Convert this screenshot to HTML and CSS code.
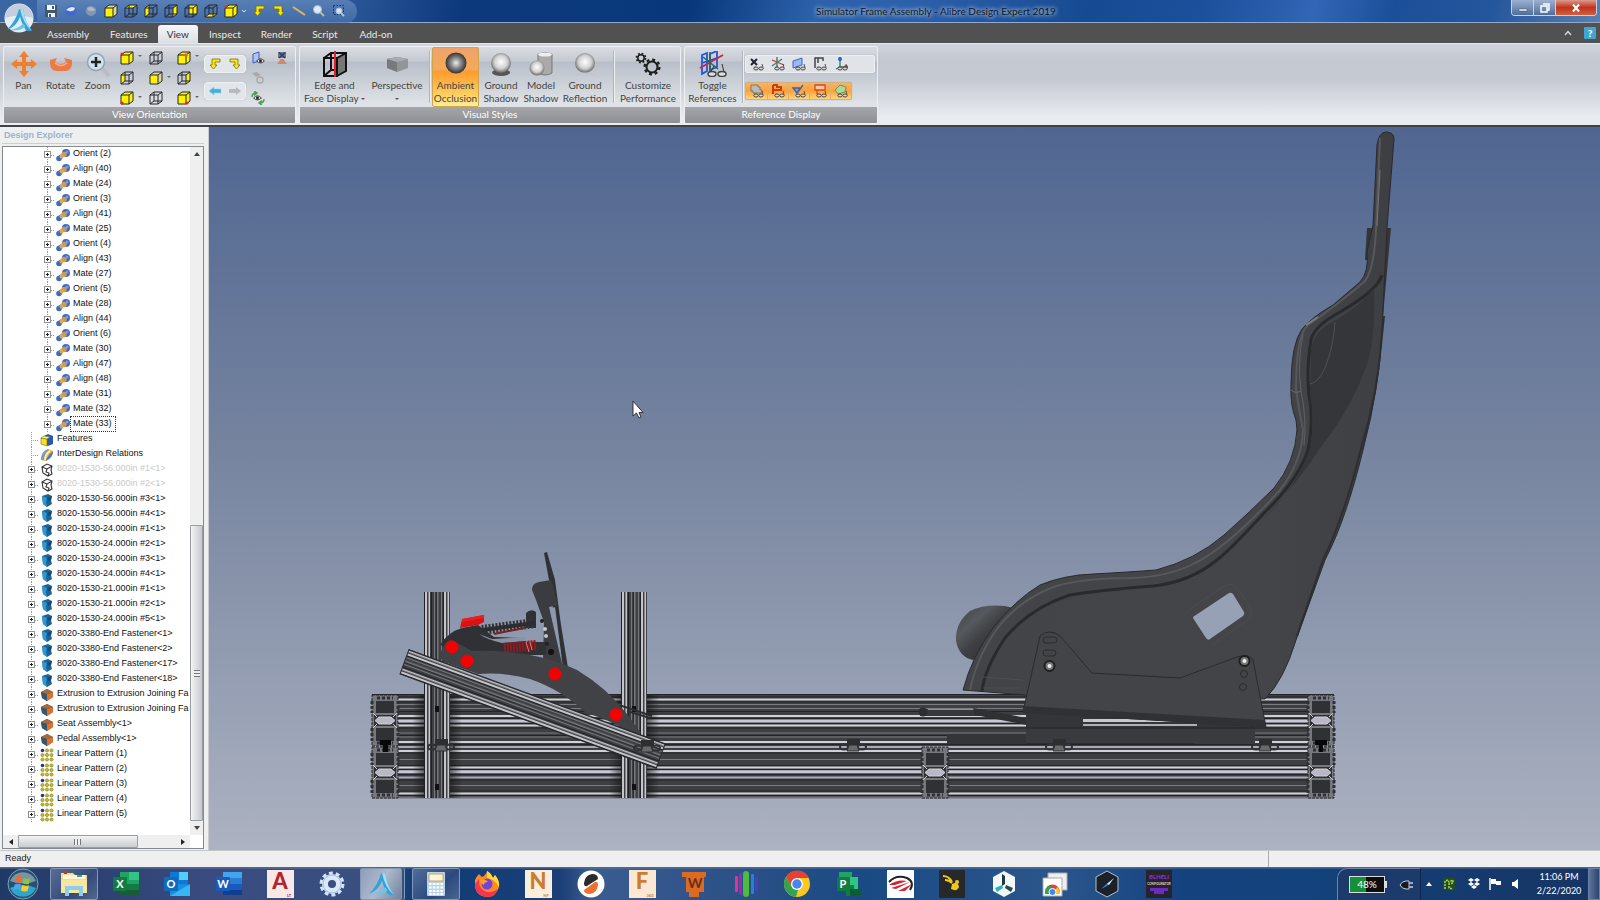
FILE: index.html
```html
<!DOCTYPE html>
<html lang="en">
<head>
<meta charset="utf-8">
<title>Simulator Frame Assembly - Alibre Design Expert 2019</title>
<link rel="stylesheet" href="styles.css">
</head>
<body>
<svg class="defs" aria-hidden="true">
  <defs>
    <path id="wire" d="M5 1V10H13M5 10L1 13M1 4H9V13H1ZM5 1H13V10M1 4L5 1M9 4L13 1M9 13L13 10" fill="none" stroke="#26262c" stroke-width="1"/>
    <symbol id="c-none" viewBox="0 0 14 14"><use href="#wire"/></symbol>
    <symbol id="c-front" viewBox="0 0 14 14"><path d="M1 4L5 1H13V10L9 13H1Z" fill="#d8d8a0"/><path d="M1 4H9V13H1Z" fill="#fff200"/><path d="M1 4H9V13H1ZM1 4L5 1H13V10L9 13M9 4L13 1" fill="none" stroke="#26262c"/></symbol>
    <symbol id="c-top" viewBox="0 0 14 14"><path d="M1 4L5 1H13L9 4Z" fill="#fff200"/><use href="#wire"/></symbol>
    <symbol id="c-left" viewBox="0 0 14 14"><path d="M1 4L5 1V10L1 13Z" fill="#fff200"/><use href="#wire"/></symbol>
    <symbol id="c-right" viewBox="0 0 14 14"><path d="M9 4L13 1V10L9 13Z" fill="#fff200"/><use href="#wire"/></symbol>
    <symbol id="c-back" viewBox="0 0 14 14"><path d="M5 1H13V10H5Z" fill="#fff200"/><use href="#wire"/></symbol>
    <symbol id="c-bottom" viewBox="0 0 14 14"><path d="M1 13L5 10H13L9 13Z" fill="#fff200"/><use href="#wire"/></symbol>
    <symbol id="c-iso" viewBox="0 0 14 14"><path d="M1 4L5 1H13V10L9 13H1Z" fill="#fff200" stroke="#26262c"/><path d="M1 4H9V13M9 4L13 1" fill="none" stroke="#26262c"/></symbol>
    <symbol id="turn-l" viewBox="0 0 12 12"><path d="M11 1V4H6V7H8L4.500 11L1 7H3V1Z" fill="#ffe800" stroke="#77701a" stroke-width=".8"/></symbol>
    <symbol id="turn-r" viewBox="0 0 12 12"><path d="M1 1V4H6V7H4L7.500 11L11 7H9V1Z" fill="#ffe800" stroke="#77701a" stroke-width=".8"/></symbol>
    <symbol id="glasses" viewBox="0 0 14 14"><path d="M5 9.500L4 12M12 7L13 10.500" stroke="#555" fill="none"/><ellipse cx="6" cy="11.500" rx="2.200" ry="1.500" fill="#ddd" stroke="#444"/><ellipse cx="11" cy="11.500" rx="2.200" ry="1.500" fill="#ddd" stroke="#444"/></symbol>
    <symbol id="eye" viewBox="0 0 10 7"><path d="M.5 3.500Q5-1.500 9.500 3.500Q5 8 .5 3.500Z" fill="#eee" stroke="#222"/><circle cx="5" cy="3.500" r="1.700" fill="#222"/></symbol>
    <symbol id="alibre" viewBox="0 0 26 26"><path d="M2 22Q10 14 13 3H17Q18 14 25 23Q21 24 19 22Q15 15 14 10Q11 19 2 22Z" fill="#36a3d8"/><path d="M5 22Q13 21 17 16L19 19Q13 24 5 22Z" fill="#6cc6ea"/><path d="M14 3H17Q18 14 25 23Q17 17 14 3Z" fill="#a8def5"/></symbol>
    <symbol id="i-mate" viewBox="0 0 14 14"><path d="M3 10L6 8" stroke="#3d6cba" stroke-width="4"/><circle cx="10" cy="5" r="4" fill="#4169c4"/><circle cx="8" cy="6.500" r="2.700" fill="#d29b48"/><circle cx="3" cy="10.500" r="2.800" fill="#3d6cba"/><circle cx="5.500" cy="8.500" r="2" fill="#d9aa55"/><circle cx="11" cy="4" r="1.500" fill="#7f9be0"/></symbol>
    <symbol id="i-feature" viewBox="0 0 14 14"><path d="M4 3L8 1L13 3V11L8 13L4 11Z" fill="#2c58b0"/><path d="M1 5L7 6V13L1 11Z" fill="#f5e51c" stroke="#776d10" stroke-width=".6"/><path d="M1 5L4 3L10 4L7 6Z" fill="#fff68c" stroke="#776d10" stroke-width=".6"/></symbol>
    <symbol id="i-relation" viewBox="0 0 14 14"><path d="M1 12Q1 3 8 1L13 3Q14 9 6 13Z" fill="#f4b32c"/><path d="M1 12Q1 4 8 1L9 2Q4 5 4 12Z" fill="#6a9be0"/><path d="M13 3Q13 9 6 13Q7 8 13 3Z" fill="#4a78c8"/><path d="M5 12Q5 6 10 3" stroke="#fff6c8" stroke-width="1.500" fill="none"/></symbol>
    <symbol id="i-ghost" viewBox="0 0 14 14"><path d="M2 4L7 1L12 3L11 7L12 11L8 13L3 10ZM2 4L7 6L12 3M7 6L6 9L9 10L8 13" fill="#fff" stroke="#333" stroke-width="1.100"/></symbol>
    <symbol id="i-part" viewBox="0 0 14 14"><path d="M2 3L8 1L12 3L11 7L12 11L7 14L3 11Z" fill="#1d6496"/><path d="M2 3L7 5L6 9L7 14L3 11Z" fill="#2f97d4"/><path d="M7 5L12 3L11 7L8 8Z" fill="#174a70"/></symbol>
    <symbol id="i-asm" viewBox="0 0 14 14"><path d="M1 4L7 1L13 4V9L7 13L2 10Z" fill="#6d4028"/><path d="M1 4L7 6V13L2 10Z" fill="#35586c"/><path d="M7 6L13 4V9L7 13Z" fill="#e0712c"/><path d="M1 4L7 1L13 4L7 6Z" fill="#a66a43"/></symbol>
    <symbol id="i-pattern" viewBox="0 0 14 14"><g fill="#c8bd22" stroke="#7c7512" stroke-width=".6"><circle cx="7" cy="2.500" r="1.600"/><circle cx="11.500" cy="2.500" r="1.600"/><circle cx="2.500" cy="7" r="1.600"/><circle cx="7" cy="7" r="1.600"/><circle cx="11.500" cy="7" r="1.600"/><circle cx="2.500" cy="11.500" r="1.600"/><circle cx="7" cy="11.500" r="1.600"/><circle cx="11.500" cy="11.500" r="1.600"/></g><circle cx="2.500" cy="2.500" r="1.800" fill="#26329c"/></symbol>
    <radialGradient id="ball" cx=".5" cy=".45" r=".55"><stop offset="0" stop-color="#fff"/><stop offset=".6" stop-color="#d0d0d0"/><stop offset="1" stop-color="#666"/></radialGradient>
    <radialGradient id="darkball" cx=".5" cy=".5" r=".5"><stop offset="0" stop-color="#eee"/><stop offset=".5" stop-color="#888"/><stop offset="1" stop-color="#333"/></radialGradient>
  </defs>
</svg>

<header class="titlebar">
  <button class="app-orb" aria-label="Application menu"><svg width="30" height="34" viewBox="0 0 30 34"><circle cx="15" cy="17" r="14.500" fill="#e4edf6"/><path d="M1 17a14 14 0 0 1 28 0Q15 12 1 17Z" fill="#c3cfde"/><use href="#alibre" x="1" y="5" width="28" height="28"/></svg></button>
  <nav class="qat" aria-label="Quick access">
    <button aria-label="Save"><svg width="14" height="14"><path d="M1 1H13V13H1Z" fill="#41586f"/><path d="M3 1H11V6H3ZM4 9H11V13H4Z" fill="#f4f8fb"/><path d="M8 2H10V5H8ZM5 10H7V13H5Z" fill="#41586f"/></svg></button>
    <button aria-label="Undo"><svg width="14" height="14"><circle cx="7" cy="7" r="5.500" fill="#4468d0"/><path d="M2 6Q7 1 11 4Q10 8 5 7Z" fill="#dfe8ff"/></svg></button>
    <button aria-label="Redo"><svg width="14" height="14"><circle cx="7" cy="7" r="5" fill="#8496b4"/><path d="M12 6Q7 1 3 4Q4 8 9 7Z" fill="#a8b5ca"/></svg></button>
    <button aria-label="Front"><svg width="14" height="14"><use href="#c-front"/></svg></button>
    <button aria-label="Top"><svg width="14" height="14"><use href="#c-top"/></svg></button>
    <button aria-label="Left"><svg width="14" height="14"><use href="#c-left"/></svg></button>
    <button aria-label="Right"><svg width="14" height="14"><use href="#c-right"/></svg></button>
    <button aria-label="Back"><svg width="14" height="14"><use href="#c-back"/></svg></button>
    <button aria-label="Bottom"><svg width="14" height="14"><use href="#c-bottom"/></svg></button>
    <button aria-label="Isometric" class="with-caret"><svg width="24" height="14"><use href="#c-iso" width="14" height="14"/><circle cx="2" cy="3" r="1.500" fill="#e22"/><path d="M18 6l2 2l2-2" stroke="#dde6f2" fill="none"/></svg></button>
    <button aria-label="Turn left"><svg width="12" height="12"><use href="#turn-l"/></svg></button>
    <button aria-label="Turn right"><svg width="12" height="12"><use href="#turn-r"/></svg></button>
    <button aria-label="Measure"><svg width="14" height="14"><path d="M1 3L13 11" stroke="#e3b458" stroke-width="2"/></svg></button>
    <button aria-label="Zoom"><svg width="14" height="14"><path d="M8 8L12 12" stroke="#d7b45a" stroke-width="2"/><circle cx="5.500" cy="5.500" r="4" fill="#dceaf6" stroke="#a9bdd4"/></svg></button>
    <button aria-label="Zoom window"><svg width="14" height="14"><path d="M1.500 1.500H11.500V10.500H1.500Z" fill="none" stroke="#16335c" stroke-dasharray="1.500 1.500"/><path d="M8 8L12 12" stroke="#b9c6d8" stroke-width="2"/><circle cx="7" cy="7" r="3" fill="#cfe2f4" stroke="#a9bdd4"/></svg></button>
  </nav>
  <h1 class="title">Simulator Frame Assembly - Alibre Design Expert 2019</h1>
  <div class="win-buttons">
    <button class="win-min" aria-label="Minimize"><svg width="10" height="10"><path d="M1 6H9V8H1Z" fill="#fff" stroke="#445" stroke-width=".5"/></svg></button>
    <button class="win-max" aria-label="Restore"><svg width="10" height="10"><path d="M3 1H9V7H7M1 3H7V9H1Z" fill="none" stroke="#fff" stroke-width="1.500"/></svg></button>
    <button class="win-close" aria-label="Close"><svg width="10" height="10"><path d="M2 1.500L8 8.500M8 1.500L2 8.500" stroke="#fff" stroke-width="2.200"/></svg></button>
  </div>
</header>

<nav class="tabs">
  <a href="#assembly">Assembly</a><a href="#features">Features</a><a href="#view" class="active">View</a><a href="#inspect">Inspect</a><a href="#render">Render</a><a href="#script">Script</a><a href="#addon">Add-on</a>
  <div class="tabs-end">
    <button aria-label="Collapse ribbon"><svg width="8" height="6"><path d="M1 5L4 1.500L7 5" fill="none" stroke="#ddd" stroke-width="1.300"/></svg></button>
    <button class="help" aria-label="Help">?</button>
  </div>
</nav>

<section class="ribbon">
  <div class="group g-orient">
    <div class="tools">
      <button class="big"><svg width="26" height="26" viewBox="0 0 26 26"><path d="M13 0L18 6H15V11H20V8L26 13L20 18V15H15V20H18L13 26L8 20H11V15H6V18L0 13L6 8V11H11V6H8Z" fill="#f08030"/></svg><span>Pan</span></button>
      <button class="big"><svg width="26" height="26" viewBox="0 0 26 26"><path d="M2 9L9 7L7 11Q13 15 18 11L16 7L24 9Q25 19 18 20H8Q1 19 2 9Z" fill="#ea7a48"/><path d="M7 12Q13 17 19 12" stroke="#f8b08a" stroke-width="1.500" fill="none"/></svg><span>Rotate</span></button>
      <button class="big"><svg width="26" height="26" viewBox="0 0 26 26"><path d="M17 17L24 25" stroke="#b9bcc4" stroke-width="4"/><circle cx="11" cy="11" r="8.500" fill="#cde3ee" stroke="#93a3ae" stroke-width="1.500"/><path d="M11 6V16M6 11H16" stroke="#222" stroke-width="2.500"/></svg><span>Zoom</span></button>
      <div class="cubes">
        <button aria-label="View 1"><svg width="24" height="14"><use href="#c-iso" width="14" height="14"/><circle cx="2" cy="3" r="1.600" fill="#e22"/><path d="M18 4h4l-2 2z" fill="#666"/></svg></button>
        <button aria-label="View 2"><svg width="24" height="14"><use href="#c-none" width="14" height="14"/></svg></button>
        <button aria-label="View 3"><svg width="24" height="14"><use href="#c-iso" width="14" height="14"/><circle cx="9" cy="4" r="1.800" fill="#e62"/><path d="M18 4h4l-2 2z" fill="#666"/></svg></button>
        <button aria-label="View 4"><svg width="24" height="14"><use href="#c-left" width="14" height="14"/></svg></button>
        <button aria-label="View 5"><svg width="24" height="14"><use href="#c-front" width="14" height="14"/><path d="M18 5h4l-2 2z" fill="#666"/></svg></button>
        <button aria-label="View 6"><svg width="24" height="14"><use href="#c-right" width="14" height="14"/></svg></button>
        <button aria-label="View 7"><svg width="24" height="14"><use href="#c-iso" width="14" height="14"/><circle cx="2" cy="12" r="1.600" fill="#e22"/><path d="M18 5h4l-2 2z" fill="#666"/></svg></button>
        <button aria-label="View 8"><svg width="24" height="14"><use href="#c-none" width="14" height="14"/></svg></button>
        <button aria-label="View 9"><svg width="24" height="14"><use href="#c-iso" width="14" height="14"/><circle cx="10" cy="12" r="1.600" fill="#e22"/><path d="M18 5h4l-2 2z" fill="#666"/></svg></button>
      </div>
      <div class="pairs">
        <div class="pair"><button aria-label="Rotate left"><svg width="12" height="12"><use href="#turn-l"/></svg></button><button aria-label="Rotate right"><svg width="12" height="12"><use href="#turn-r"/></svg></button></div>
        <div class="pair"><button aria-label="Previous view"><svg width="14" height="10"><path d="M1 5L6 1V3H13V7H6V9Z" fill="#3fb0dc" stroke="#9cd0e4" stroke-width=".6"/></svg></button><button aria-label="Next view"><svg width="14" height="10"><path d="M13 5L8 1V3H1V7H8V9Z" fill="#b6b9bd"/></svg></button></div>
      </div>
      <div class="mini">
        <button aria-label="Orient to plane"><svg width="14" height="14"><path d="M2 3L8 1V10L2 12Z" fill="#aec4ee" stroke="#3a60c8"/><use href="#eye" x="5" y="7" width="9" height="6"/></svg></button>
        <button aria-label="Clear view"><svg width="14" height="14"><path d="M3 1H11V7H3Z" fill="#777"/><path d="M4 1.500L10 7M10 1.500L4 7" stroke="#223b88" stroke-width="1.500"/><path d="M5 8H9V9L12 13H2L5 9Z" fill="#d88668"/></svg></button>
        <button aria-label="Hide view"><svg width="14" height="14"><path d="M1 2L6 1L10 4L5 6Z" fill="#aaa"/><circle cx="9" cy="9" r="3" fill="none" stroke="#aaa" stroke-width="1.500"/></svg></button>
        <button aria-label="Rotate view"><svg width="14" height="14"><path d="M1 6Q1 2 5 2M3 0L6 2L3 4.500M13 8Q13 12 9 12M11 9.500L8 12L11 14" fill="none" stroke="#46a355" stroke-width="1.500"/><use href="#eye" x="2" y="4" width="9" height="6"/></svg></button>
      </div>
    </div>
    <h2>View Orientation</h2>
  </div>
  <div class="group g-style">
    <div class="tools">
      <button class="big w-edge"><svg width="26" height="26" viewBox="0 0 26 26"><path d="M15 7L24 2V20L15 25Z" fill="#777"/><path d="M2 7H15V25H2ZM2 7L9 2H24V20L15 25M15 7L24 2M9 2V19L2 25M9 19H15" fill="none" stroke="#111" stroke-width="2"/><path d="M13 0V26" stroke="#e81c2c" stroke-width="2"/></svg><span>Edge and<br>Face Display <i></i></span></button>
      <button class="big w-persp"><svg width="26" height="26" viewBox="0 0 26 26"><path d="M3 8L13 6V21L3 17Z" fill="#777b80"/><path d="M13 6L24 8V17L13 21Z" fill="#92969b"/><path d="M3 8L13 6L24 8L13 11Z" fill="#a7abb0"/></svg><span>Perspective<br><i></i></span></button>
      <hr>
      <button class="big w-amb active"><svg width="26" height="26" viewBox="0 0 26 26"><circle cx="13" cy="12" r="10.500" fill="url(#darkball)"/></svg><span>Ambient<br>Occlusion</span></button>
      <button class="big w-shadow"><svg width="26" height="26" viewBox="0 0 26 26"><ellipse cx="13" cy="21.500" rx="9" ry="3.500" fill="#555"/><circle cx="13" cy="12" r="10" fill="url(#ball)"/></svg><span>Ground<br>Shadow</span></button>
      <button class="big w-model"><svg width="26" height="26" viewBox="0 0 26 26"><path d="M10 3Q17 0 24 3V22Q17 26 10 22Z" fill="#aaa" stroke="#777"/><ellipse cx="17" cy="3.500" rx="7" ry="2" fill="#eee"/><circle cx="9" cy="17" r="7.500" fill="url(#ball)"/></svg><span>Model<br>Shadow</span></button>
      <button class="big w-reflect"><svg width="26" height="26" viewBox="0 0 26 26"><circle cx="13" cy="12" r="10" fill="url(#ball)"/><path d="M4 24Q13 20 22 24" stroke="#c0c2c6" fill="none"/></svg><span>Ground<br>Reflection</span></button>
      <hr>
      <button class="big w-perf"><svg width="26" height="26" viewBox="0 0 26 26"><g fill="none" stroke="#1a1a1a"><circle cx="6" cy="7" r="3.200" stroke-width="1.500"/><circle cx="6" cy="7" r="4.600" stroke-width="1.600" stroke-dasharray="1.800 1.810"/><circle cx="17" cy="16" r="5.500" stroke-width="2"/><circle cx="17" cy="16" r="7.400" stroke-width="2.200" stroke-dasharray="2.900 2.910"/></g></svg><span>Customize<br>Performance</span></button>
    </div>
    <h2>Visual Styles</h2>
  </div>
  <div class="group g-ref">
    <div class="tools">
      <button class="big w-toggle"><svg width="28" height="26" viewBox="0 0 28 26"><path d="M3 4L8 2V20L3 23ZM11 3L18 0V16L11 19ZM3 12L18 7" fill="none" stroke="#2454dc" stroke-width="1.800"/><path d="M1 17L24 4" stroke="#cb2645" stroke-width="2"/><path d="M11 1V25M4 6L19 18" stroke="#286b50" stroke-width="1.500"/><path d="M11 22L15 15M25 21L23 13" stroke="#333"/><ellipse cx="13" cy="23" rx="4" ry="2.500" fill="#ddd" stroke="#444" stroke-width="1.500"/><ellipse cx="23" cy="23" rx="4" ry="2.500" fill="#ddd" stroke="#444" stroke-width="1.500"/></svg><span>Toggle<br>References</span></button>
      <hr>
      <div class="refs">
        <div class="strip">
          <button aria-label="Points"><svg width="14" height="14"><path d="M1 2L7 8M7 2L1 8" stroke="#223" stroke-width="2"/><use href="#glasses"/></svg></button>
          <button aria-label="Axes"><svg width="14" height="14"><path d="M6 0V11" stroke="#333"/><path d="M1 3L13 8" stroke="#c33" stroke-width="1.300"/><path d="M1 9L11 2" stroke="#386" stroke-width="1.300"/><use href="#glasses"/></svg></button>
          <button aria-label="Planes"><svg width="14" height="14"><path d="M1 4L10 1V8L1 11Z" fill="#9bb9ee" stroke="#3c67cb"/><use href="#glasses"/></svg></button>
          <button aria-label="Surfaces"><svg width="14" height="14"><path d="M2 11V1H10V4M5 1V6" fill="none" stroke="#444" stroke-width="1.500"/><use href="#glasses"/></svg></button>
          <button aria-label="Origin"><svg width="14" height="14"><path d="M6 2V10H12M6 10L2 12" stroke="#2a7a55" fill="none" stroke-width="1.300"/><circle cx="6" cy="2" r="2" fill="#2461c4"/><circle cx="12" cy="10" r="2" fill="#b33"/><use href="#glasses"/></svg></button>
        </div>
        <div class="strip hot">
          <button aria-label="Sketches"><svg width="14" height="14"><path d="M1 1H8V3H10V6H12V9H3V7H1Z" fill="#bcbcae" stroke="#777"/><use href="#glasses"/></svg></button>
          <button aria-label="Parts"><svg width="14" height="14"><path d="M2 1V10M2 6H10V3H6V1H2" fill="none" stroke="#cd3b16" stroke-width="2"/><use href="#glasses"/></svg></button>
          <button aria-label="Welds"><svg width="14" height="14"><path d="M1 4H8L5 9ZM6 8L11 1" fill="#7c9cd8" stroke="#4062a8" stroke-width="1.300"/><use href="#glasses"/></svg></button>
          <button aria-label="Notes"><svg width="14" height="14"><path d="M2 1H12V6H2ZM4 6V10" fill="#f8c8a0" stroke="#d84820" stroke-width="1.300"/><use href="#glasses"/></svg></button>
          <button aria-label="Constraints"><svg width="14" height="14"><path d="M1 6L6 1L12 3L11 8L4 10Z" fill="#b5d49a" stroke="#5f9f58"/><use href="#glasses"/></svg></button>
        </div>
      </div>
    </div>
    <h2>Reference Display</h2>
  </div>
</section>

<main class="work">
  <aside class="explorer">
    <h2>Design Explorer</h2>
    <div class="tree-box">
      <ul class="tree" id="tree"></ul>
      <div class="vbar"><button aria-label="Scroll up"><svg width="6" height="4"><path d="M0 4L3 0L6 4Z" fill="#444"/></svg></button><div class="vgap"></div><div class="vthumb"></div><button aria-label="Scroll down"><svg width="6" height="4"><path d="M0 0L3 4L6 0Z" fill="#444"/></svg></button></div>
      <div class="hbar"><button aria-label="Scroll left"><svg width="4" height="6"><path d="M4 0L0 3L4 6Z" fill="#222"/></svg></button><div class="hthumb"></div><div class="hgap"></div><button aria-label="Scroll right"><svg width="4" height="6"><path d="M0 0L4 3L0 6Z" fill="#222"/></svg></button></div>
    </div>
  </aside>
  <svg class="viewport" viewBox="209 127 1391 723" preserveAspectRatio="xMidYMid slice" role="img" aria-label="Side view of the simulator frame with pedals and seat">
    <defs>
      <linearGradient id="sky" x1="0" y1="0" x2="0" y2="1"><stop offset="0" stop-color="#506691"/><stop offset=".45" stop-color="#76849f"/><stop offset="1" stop-color="#acb2c1"/></linearGradient>
      <pattern id="post" width="26" height="400" patternUnits="userSpaceOnUse"><path d="M0 0H26V400H0Z" fill="#3f4043"/><path d="M1 0H3V400H1ZM4.500 0H6V400H4.500ZM20 0H22V400H20ZM23.500 0H25V400H23.500Z" fill="#c4c5cb"/><path d="M10 0H11V400H10ZM13 0H14.500V400H13ZM17 0H18V400H17Z" fill="#77787c"/><path d="M0 0H1V400H0ZM7 0H8V400H7ZM12 0H12.700V400H12ZM19 0H20V400H19Z" fill="#202125"/></pattern>
      <linearGradient id="shade"><stop offset="0" stop-color="#111" stop-opacity="0"/><stop offset=".3" stop-color="#111" stop-opacity=".7"/><stop offset=".7" stop-color="#111" stop-opacity=".7"/><stop offset="1" stop-color="#111" stop-opacity="0"/></linearGradient>
      <linearGradient id="seatback" x1="0" y1="0" x2="1" y2="0"><stop offset="0" stop-color="#434447"/><stop offset=".7" stop-color="#444548"/><stop offset="1" stop-color="#3e3f42"/></linearGradient>
      <linearGradient id="cushion" x1="0" y1="0" x2="1" y2="1"><stop offset="0" stop-color="#3f4245"/><stop offset=".3" stop-color="#56595d"/><stop offset=".5" stop-color="#3e4043"/><stop offset="1" stop-color="#28292b"/></linearGradient>
      <g id="profile"><path d="M0 0H26V51H0Z" fill="#77787d"/><path d="M0 0H26V51H0Z" fill="none" stroke="#26272a" stroke-dasharray="3 1"/><path d="M4 6H22V18H4ZM4 33H22V46H4Z" fill="#303134"/><path d="M0 6V18M26 6V18M0 33V46M26 33V46M5 3H21M5 48H21" stroke="#303134" stroke-width="3" stroke-dasharray="3 2"/><path d="M2 20H24V31H2Z" fill="#303134"/><path d="M3 25.500L7 22H19L23 25.500L19 29H7ZM1 18L5 22M25 18L21 22M1 33L5 29M25 33L21 29" fill="#b9b8c4" stroke="#d0d0d6"/></g>
      <g id="clip"><path d="M-6-8H7V-2H-6Z" fill="#2d2e30"/><ellipse cx="-9" cy="0" rx="4" ry="2.500" fill="none" stroke="#303134" stroke-width="2"/><ellipse cx="9" cy="0" rx="4" ry="2.500" fill="none" stroke="#303134" stroke-width="2"/><path d="M-4-2H4L6 4H-6Z" fill="#68696b" stroke="#303134"/></g>
    </defs>
    <path d="M208 127H1600V850H208Z" fill="url(#sky)"/>
    <path d="M372 694H1334V798H372Z" fill="#3e3f42"/>
    <g fill="none">
      <path d="M372 699.500H1334M372 716H1334M372 725.500H1334M372 742H1334M372 751H1334M372 767.500H1334M372 793.500H1334" stroke="#cfd1d4" stroke-width="2"/>
      <path d="M372 721H1334M372 771.700H1334" stroke="#c9c8d6" stroke-width="3"/>
      <path d="M372 747H1334M372 777.500H1334" stroke="#a9aab8" stroke-width="2"/>
      <path d="M372 704.500H1334M372 708.500H1334M372 733H1334M372 737H1334M372 759.500H1334M372 785.500H1334" stroke="#7b7c7f"/>
      <path d="M372 694.500H1334M372 697H1334M372 702H1334M372 711.500H1334M372 718.500H1334M372 723.500H1334M372 728H1334M372 735.500H1334M372 744.500H1334M372 753H1334M372 765.500H1334M372 769.500H1334M372 774.500H1334M372 780H1334M372 791H1334M372 795.500H1334" stroke="#232427"/>
      <path d="M372 797.500H1334" stroke="#717379" stroke-width="2"/>
    </g>
    <path d="M412 695H462V798H412Z" fill="url(#shade)"/><path d="M609 695H660V798H609Z" fill="url(#shade)"/>
    <use href="#profile" x="372" y="695"/><use href="#profile" x="372" y="747"/>
    <use href="#profile" x="1308" y="695"/><use href="#profile" x="1308" y="747"/>
    <use href="#profile" x="922" y="747"/>
    <path d="M380 740H391V745H388V752H383V745H380ZM1315 740H1327V745H1323V752H1319V745H1315Z" fill="#08080a"/>
    <g transform="translate(424 592)"><path d="M0 0H26V206H0Z" fill="url(#post)"/><path d="M11 114H15V120H11ZM11 192H15V198H11Z" fill="#111"/></g>
    <g transform="translate(621 592)"><path d="M0 0H26V206H0Z" fill="url(#post)"/><path d="M11 114H15V120H11ZM11 192H15V198H11Z" fill="#111"/></g>
    <use href="#clip" x="441" y="747"/><use href="#clip" x="853" y="747"/>

    <!-- pedal set -->
    <path d="M544 553L547 552L555 580L561 625L568 668L563 667L553 608L549 580Z" fill="#303134"/>
    <path d="M532 590Q532 583 539 582L551 580L558 605L549 607L563 668L543 662L544 622L536 600Z" fill="#3b3c3f"/>
    <path d="M550 609L555 607L562 660Z" fill="#8e99ae"/>
    <path d="M526 613Q531 608 536 612V628H526ZM440 645Q448 632 462 628L478 625L494 637L522 638L526 642H546V655L480 655Z" fill="#303134"/>
    <path d="M479 634L492 639L524 637L526 641L502 643Q488 640 479 634Z" fill="#8a93a6"/>
    <path d="M462 619L484 615V622L478 625L460 628Z" fill="#d51416"/><path d="M462 619L484 615V618L462 622Z" fill="#f21b1c"/>
    <path d="M482 630L535 623" stroke="#333436" stroke-width="10" stroke-dasharray="2 1.500"/><path d="M494 634L524 628" stroke="#7f2024" stroke-width="2"/><path d="M482 630L535 623" stroke="#2c2d2f" stroke-width="4"/>
    <path d="M504 648L536 645" stroke="#8f1a20" stroke-width="10" stroke-dasharray="2 1"/><path d="M526 642L529 652M530 642L532 650" stroke="#e77" stroke-width="1"/>
    <path d="M440 658Q441 645 450 640L461 645L472 651Q500 650 525 654Q554 659 577 670Q607 688 627 714L641 733L632 733Q610 720 586 713Q562 690 530 679Q505 672 478 674L444 662Z" fill="#414246"/>
    <circle cx="545" cy="629" r="2" fill="#c4c9d0"/><circle cx="546" cy="636" r="2" fill="#c4c9d0"/><circle cx="551" cy="652" r="3" fill="#111"/><circle cx="542" cy="621" r="2" fill="#222"/><circle cx="547" cy="644" r="2" fill="#222"/>
    <path d="M622 706L652 716M627 711L650 718" stroke="#2c2d30" stroke-width="2"/>
    <g transform="translate(400 674) rotate(-69.800)"><path d="M0 0H26V273H0Z" fill="url(#post)" stroke="#28292c"/></g>
    <use href="#clip" x="647" y="748"/>
    <g fill="#f50000"><circle cx="452" cy="647" r="6.500"/><circle cx="467" cy="661" r="6.500"/><circle cx="555" cy="674" r="6.500"/><circle cx="616" cy="714.500" r="6.500"/></g>

    <!-- seat -->
    <path d="M920 709H985V716H920Z" fill="#37383b"/><circle cx="923" cy="712" r="4.500" fill="#2c2d2f"/><path d="M928 709.500H975" stroke="#8e8f98"/>
    <path d="M973 708L1027 718V725L975 715Z" fill="#2f3032"/>
    <path d="M1014 608Q990 602 970 611Q955 623 956 641Q959 657 973 660L1000 650Z" fill="url(#cushion)"/>
    <path d="M1367 228H1391L1383 316H1379L1377 260H1365Z" fill="#333537"/>
    <path d="M963 690Q972 656 993 628Q1015 600 1040 585Q1064 575 1093 574Q1130 572 1156 570Q1195 560 1224 535Q1250 512 1274 488Q1295 462 1297 430L1296 420Q1290 405 1291 385Q1291 345 1302 329Q1312 317 1333 305L1360 282Q1369 272 1367 252L1373 225L1377 145Q1379 132 1386 132Q1394 132 1394 139L1387 228L1382 330Q1380 385 1363 450Q1346 520 1325 560L1296 640Q1284 680 1265 699L1026 695Z" fill="url(#seatback)" stroke="#292a2d"/>
    <path d="M1382 275Q1378 290 1340 312Q1314 326 1311 340Q1306 370 1309 395Q1314 420 1308 450Q1298 480 1265 512Q1230 550 1217 560Q1190 582 1153 586Q1100 590 1070 595Q1030 608 1005 638Q985 668 982 691" fill="none" stroke="#292a2c" stroke-width="3"/>
    <path d="M1380 138L1376 230Q1374 270 1365 281Q1340 303 1308 325Q1296 335 1296 390Q1299 410 1303 430Q1302 462 1280 490Q1230 545 1197 562Q1170 577 1130 578Q1085 578 1056 586Q1010 603 988 643Q975 665 970 690" fill="none" stroke="#57585b" stroke-width="2"/>
    <path d="M1303 334Q1297 365 1301 391Q1307 420 1304 445" fill="none" stroke="#606164"/>
    <path d="M1374 288Q1376 345 1364 372Q1350 410 1320 448Q1300 480 1262 520Q1298 486 1310 448Q1315 420 1310 392L1311 350Q1314 330 1336 320Q1362 305 1374 288Z" fill="#35363a"/>
    <path d="M1335 322Q1334 345 1325 368Q1318 383 1310 384" fill="none" stroke="#4f5053"/>
    <path d="M1384 316L1381 345Q1377 395 1362 445Q1345 515 1323 560L1297 636" fill="none" stroke="#2d2e31" stroke-width="2"/>
    <path d="M1301 391Q1295 394 1291 390" stroke="#6b6c6f" fill="none"/>
    <path d="M1380 170L1377 226" stroke="#747679" stroke-width="1"/>
    <path d="M1306 325L1318 317" stroke="#7b7c80" stroke-width="2"/>
    <path d="M1193 618Q1193 616 1196 615L1229 593Q1231 592 1233 594L1244 612Q1245 614 1243 616L1210 639Q1208 641 1206 638Z" fill="#97a1b5"/>
    <path d="M1186 616Q1184 613 1190 609L1224 586Q1233 582 1238 589L1250 607Q1254 614 1248 620L1212 645" fill="none" stroke="#4b4c4f"/>
    <path d="M983 677L1023 680M983 688H1020" stroke="#4e4f51"/>
    <path d="M947 734H1026V713H1255V744H947Z" fill="#343538"/>
    <path d="M1083 719H1197V722H1083Z" fill="#c8c9ce"/><path d="M1083 724H1197V726H1083Z" fill="#aeb0b6"/>
    <path d="M1026 727H1255V744H1026Z" fill="#3a3b3e"/><path d="M1026 728H1255M1026 744H1195" stroke="#202124"/>
    <path d="M1040 636Q1044 632 1050 632Q1055 632 1060 636L1092 673L1180 678L1237 657Q1249 653 1253 660L1266 727L1023 712Z" fill="#434447" stroke="#2a2b2e"/>
    <path d="M1023 706L1265 720V727L1023 713Z" fill="#303134"/>
    <g fill="none" stroke="#2b2c2f"><rect x="1043" y="637" width="14" height="6" rx="3"/><rect x="1043" y="650" width="13" height="6" rx="3"/><circle cx="1244" cy="674" r="3.500"/><circle cx="1243" cy="687" r="3.500"/></g>
    <g fill="#777" stroke="#1e1f21" stroke-width="2"><circle cx="1049.500" cy="666" r="5"/><circle cx="1244.500" cy="661" r="5"/></g><g fill="#eee"><circle cx="1049.500" cy="666" r="2"/><circle cx="1244.500" cy="661" r="2"/></g>
    <use href="#clip" x="1059" y="747"/><use href="#clip" x="1265" y="747"/>

    <path d="M633 401V416L636.500 413L639 418L641 417L639 412.500H643Z" fill="#fff" stroke="#333"/>
  </svg>
</main>

<footer class="status"><span>Ready</span><span></span></footer>

<div class="taskbar">
  <button class="start" aria-label="Start"><svg width="32" height="32" viewBox="0 0 32 32"><circle cx="16" cy="16" r="15" fill="#27506e" stroke="#7aa4bd"/><path d="M3 20Q16 14 29 20A14 14 0 0 1 3 20Z" fill="#2ca6cd"/><path d="M3 13A14 14 0 0 1 29 13Q16 18 3 13Z" fill="#7a94a2"/><path d="M9 9Q12 7 15 9L14 15Q11 13 8 15Z" fill="#ee6a34"/><path d="M16.500 10Q20 12 23 10L22 16Q19 17 15.500 15Z" fill="#8bc540"/><path d="M7.500 16.500Q11 15 14 16.500L13 22Q10 20 6.500 22Z" fill="#4aa6e8"/><path d="M15 17Q19 19 22 17.500L20.500 23Q17 24 14 22.500Z" fill="#fcc92f"/></svg></button>
  <div class="apps">
    <button class="open" aria-label="Explorer"><svg width="28" height="26" viewBox="0 0 28 26"><path d="M1 2H13L15 4H27V22H1Z" fill="#f3dd83"/><path d="M3 4H25V8H3Z" fill="#fff7d8"/><path d="M1 9H27V22H1Z" fill="#f7e6a0"/><path d="M5 25V15H23V25H19V19H9V25Z" fill="#8fcdee"/><path d="M4 2H7" stroke="#c33" stroke-width="2"/><path d="M17 5H22" stroke="#3a7" stroke-width="2"/></svg></button>
    <button aria-label="Excel"><svg width="26" height="26" viewBox="0 0 26 26"><path d="M7 1H26V24H7Z" fill="#21a366"/><path d="M16 1H26V9H16Z" fill="#33c481"/><path d="M7 13H26V24H7Z" fill="#107c41"/><path d="M7 19H26V24H7Z" fill="#185c37"/><rect y="6" width="14" height="14" rx="1" fill="#107c41"/><text x="7" y="17" class="letter">X</text></svg></button>
    <button aria-label="Outlook"><svg width="26" height="26" viewBox="0 0 26 26"><path d="M6 1H24V16H6Z" fill="#0f78d4"/><path d="M15 1H24V9H15Z" fill="#50d0f6"/><path d="M6 12L26 14V25H6Z" fill="#1490df"/><path d="M6 25L26 13V25Z" fill="#35b8f1"/><rect y="6" width="14" height="14" rx="1" fill="#0f6cbd"/><text x="7" y="17" class="letter">O</text></svg></button>
    <button aria-label="Word"><svg width="26" height="26" viewBox="0 0 26 26"><path d="M7 1H26V24H7Z" fill="#2b7cd3"/><path d="M7 1H26V7H7Z" fill="#41a5ee"/><path d="M7 13H26V24H7Z" fill="#185abd"/><path d="M7 19H26V24H7Z" fill="#103f91"/><rect y="6" width="14" height="14" rx="1" fill="#185abd"/><text x="7" y="17" class="letter">W</text></svg></button>
    <button aria-label="AutoCAD LT"><svg width="27" height="28" viewBox="0 0 27 28"><path d="M0 0H27V28H0Z" fill="#f7e9e6"/><text x="13" y="19" class="letter huge red">A</text><text x="22" y="27" class="letter tiny red">LT</text></svg></button>
    <button aria-label="Settings"><svg width="26" height="26" viewBox="0 0 26 26"><circle cx="13" cy="13" r="10.500" fill="none" stroke="#d2e2f8" stroke-width="4" stroke-dasharray="3.800 2.800"/><circle cx="13" cy="13" r="7" fill="none" stroke="#dbe8fb" stroke-width="6"/><circle cx="13" cy="13" r="9" fill="none" stroke="#9fbbe4" stroke-width="1"/></svg></button>
    <button class="open lit" aria-label="Alibre"><svg width="28" height="28"><use href="#alibre"/></svg></button>
    <button class="open" aria-label="Calculator"><svg width="22" height="26" viewBox="0 0 22 26"><rect x="2" y="1" width="18" height="24" rx="1" fill="#b9d4e8"/><path d="M4 3H18V10H4Z" fill="#fff6d8" stroke="#b7984d" stroke-width=".8"/><path d="M4 13H18M4 16.500H18M4 20H18M4 23H18" stroke="#fff" stroke-width="2.200" stroke-dasharray="2.600 1.200"/></svg></button>
    <button aria-label="Firefox"><svg width="28" height="28" viewBox="0 0 28 28"><path d="M2 10Q4 6 6 4L9 7Q13 5 14 1Q18 3 20 8L22 5Q27 11 26 17Q23 27 14 27Q2 26 2 14Z" fill="#ff8a20"/><path d="M14 1Q18 3 20 8L22 5Q27 11 26 17Q22 9 14 8Z" fill="#ffd53c"/><path d="M2 14Q2 26 14 27Q23 26 25 19Q17 25 10 20Q5 16 6 9Z" fill="#f8344e"/><circle cx="14" cy="14" r="5.500" fill="#7542d8"/><path d="M7 10Q12 8 15 12Q11 12 11 15Q8 14 7 10Z" fill="#ff9f28"/></svg></button>
    <button aria-label="Netfabb"><svg width="27" height="28" viewBox="0 0 27 28"><path d="M0 0H27V28H0Z" fill="#fbeedd"/><text x="13" y="19" class="letter huge orange">N</text><text x="21" y="27" class="letter tiny orange">NF</text></svg></button>
    <button aria-label="PrusaSlicer"><svg width="28" height="28" viewBox="0 0 28 28"><circle cx="14" cy="14" r="13.500" fill="#fff"/><path d="M7 13Q8 5 15 4Q21 4 21 9L10 16Q7 17 7 13Z" fill="#2b2b2b"/><path d="M21 15Q20 23 13 24Q7 24 7 20L18 12Q21 11 21 15Z" fill="#ee7030"/></svg></button>
    <button aria-label="Fusion 360"><svg width="27" height="28" viewBox="0 0 27 28"><path d="M0 0H27V28H0Z" fill="#fbe8d2"/><text x="13" y="19" class="letter huge orange">F</text><text x="21" y="27" class="letter tiny orange">360</text></svg></button>
    <button aria-label="Wiring tool"><svg width="26" height="28" viewBox="0 0 26 28"><path d="M1 2H25V7H23V22H18V27H8V22H5V7H1Z" fill="#dc6a22"/><text x="14" y="18" class="letter brown">W</text></svg></button>
    <button aria-label="Waveform"><svg width="26" height="28" viewBox="0 0 26 28"><rect x="2" y="6" width="3" height="16" rx="1" fill="#ef2c98"/><rect x="6" y="3" width="3" height="22" rx="1" fill="#9a2aa8"/><rect x="10" y="1" width="6" height="26" rx="3" fill="#4dbb3f"/><rect x="18" y="4" width="3" height="20" rx="1" fill="#277fd6"/><rect x="22" y="7" width="3" height="14" rx="1" fill="#4a3ec8"/></svg></button>
    <button aria-label="Chrome"><svg width="28" height="28" viewBox="0 0 28 28"><circle cx="14" cy="14" r="13" fill="#fbc723"/><path d="M3 7A13 13 0 0 1 26 8H14L9 17Z" fill="#e64234"/><path d="M3 7L9 17L15 20L13 27A13 13 0 0 1 3 7Z" fill="#34a350"/><circle cx="14" cy="14" r="6" fill="#fff"/><circle cx="14" cy="14" r="4.700" fill="#4586f0"/></svg></button>
    <button aria-label="Project"><svg width="26" height="26" viewBox="0 0 26 26"><path d="M3 1H16V10H3Z" fill="#21a366"/><path d="M10 6H22V18H10Z" fill="#33c481"/><path d="M10 14H18V25H10Z" fill="#107c41"/><path d="M14 18H26V25H14Z" fill="#0b5d33"/><rect x="1" y="6" width="13" height="14" rx="1" fill="#117b42"/><text x="7" y="17" class="letter">P</text></svg></button>
    <button aria-label="iRacing"><svg width="27" height="28" viewBox="0 0 27 28"><path d="M0 0H27V28H0Z" fill="#fff"/><path d="M2 12Q9 4 20 8Q28 12 23 20" fill="none" stroke="#222" stroke-width="2"/><path d="M2 15Q10 9 20 11L8 15ZM4 18L23 12L9 19ZM11 21L25 14L18 21Z" fill="#d72430"/></svg></button>
    <button aria-label="Bee"><svg width="26" height="28" viewBox="0 0 26 28"><path d="M0 0H26V28H0Z" fill="#262829"/><path d="M4 6Q10 6 13 12M6 10Q10 10 13 13" fill="none" stroke="#edc91d" stroke-width="2"/><path d="M13 14Q19 11 20 17Q18 22 12 19Z" fill="#edc91d"/><circle cx="18" cy="12" r="2" fill="#edc91d"/></svg></button>
    <button aria-label="Hex viewer"><svg width="26" height="28" viewBox="0 0 26 28"><path d="M13 1L24 7V21L13 27L2 21V7Z" fill="#f2f7f8"/><path d="M11 4L14 6V14L11 16Z" fill="#1f373f"/><path d="M4 18L11 15L12 18L6 22Z" fill="#2bb3bb"/><path d="M15 15L22 18L20 22L14 18Z" fill="#2a4a54"/></svg></button>
    <button aria-label="Remote desktop"><svg width="26" height="28" viewBox="0 0 26 28"><path d="M6 3H25V20H6Z" fill="#eee" stroke="#aaa"/><path d="M1 8H20V26H1Z" fill="#fff" stroke="#aaa"/><path d="M3 22A7 7 0 0 1 18 22Z" fill="#e64234"/><path d="M3 24A8 8 0 0 1 8 15L12 24Z" fill="#34a350"/><path d="M18 24A8 8 0 0 0 15 17L12 24Z" fill="#fbc723"/><circle cx="10.500" cy="22" r="3.500" fill="#4586f0" stroke="#fff"/></svg></button>
    <button aria-label="Pen tool"><svg width="26" height="28" viewBox="0 0 26 28"><path d="M13 1L24 7V21L13 27L2 21V7Z" fill="#1c2029" stroke="#b8bec8"/><path d="M7 19L16 11L13 16Z" fill="#3f86d8"/><path d="M13 14L20 8L15 15Z" fill="#e5ebf0"/></svg></button>
    <button aria-label="BLHeli Configurator"><svg width="26" height="28" viewBox="0 0 26 28"><path d="M0 0H26V28H0Z" fill="#26222e"/><text x="13" y="9" class="letter purple">BLHELI</text><text x="13" y="15" class="letter conf">CONFIGURATOR</text><path d="M4 18H22V21H18V24H8V21H4Z" fill="#6b2cc0"/></svg></button>
  </div>
  <div class="tray">
    <div class="power"><div class="battery"><span>48%</span></div><svg width="15" height="12"><path d="M1 6Q3 2 7 2H10V10H7Q3 10 1 6Z" fill="#151a20" stroke="#ccd"/><path d="M10 4H14M10 8H14" stroke="#ccd" stroke-width="1.500"/></svg></div>
    <div class="tray-icons">
      <button aria-label="Show hidden icons"><svg width="8" height="6"><path d="M1 5L4 1L7 5Z" fill="#fff"/></svg></button>
      <button aria-label="Graphics settings"><svg width="14" height="14"><path d="M1 1H13V13H1Z" fill="#26492c"/><path d="M3 12V4L6 3L7 5L11 3V6L7 7V11L11 12" fill="none" stroke="#9edb38" stroke-width="1.500" stroke-dasharray="2 1"/></svg></button>
      <button aria-label="Dropbox"><svg width="12" height="12"><path d="M3 0L6 2L3 4L0 2ZM9 0L12 2L9 4L6 2ZM3 4L6 6L3 8L0 6ZM9 4L12 6L9 8L6 6ZM6 7L9 9L6 11L3 9Z" fill="#fff"/></svg></button>
      <button aria-label="Action center"><svg width="12" height="12"><path d="M1 0V12" stroke="#fff" stroke-width="1.500"/><path d="M2 1H7V3H12V7H7V6H2Z" fill="#fff"/></svg></button>
      <button aria-label="Volume"><svg width="10" height="12"><path d="M2 4H4L8 1V11L4 8H2Z" fill="#fff"/></svg></button>
    </div>
    <div class="clock">11:06 PM<br>2/22/2020</div>
    <button class="show-desktop" aria-label="Show desktop"></button>
  </div>
</div>
<script src="app.js"></script>
</body>
</html>
```

FILE: styles.css
```css
* { box-sizing: border-box; }
body { margin: 0; height: 100vh; display: flex; flex-direction: column; overflow: hidden; background: #eeefef; font-family: Lato, "Open Sans", sans-serif; font-size: 10px; color: #444; }
button { font: inherit; color: inherit; background: none; border: 0; padding: 0; margin: 0; }
svg { display: block; flex: none; }
h1, h2, ul { margin: 0; padding: 0; font-weight: 400; }
.defs { position: absolute; width: 0; height: 0; }

.titlebar { position: relative; flex: none; height: 23px; display: flex; align-items: center; background: linear-gradient(105deg, #3a66a4 0, #2a5697 22%, #0c397c 29%, #08387b 43%, #2d62ab 51%, #2d60ab 57%, #164a92 68%, #1c509c 75%, #3266b6 82%, #1c4f99 87%, #24569d 93%, #5b7fae 100%); border-bottom: 1px solid #91a9cb; }
.app-orb { position: absolute; left: 4px; top: 1px; z-index: 2; }
.qat { display: flex; align-items: center; height: 23px; margin-left: 37px; padding-left: 4px; padding-right: 8px; border-radius: 0 12px 12px 0; background: linear-gradient(#6c91c2aa, #4a74b0aa); }
.qat button { width: 20px; display: flex; justify-content: center; }
.qat .with-caret { width: 28px; padding-left: 2px; }
.title { flex: 1; text-align: center; font-size: 10px; line-height: 22px; color: #101820; padding-left: 4px; text-shadow: 0 0 5px #b7cbe8, 0 0 4px #b7cbe8; }
.win-buttons { display: flex; align-self: flex-start; height: 16px; margin-right: 3px; border: 1px solid #c5d3e6; border-top: 0; border-radius: 0 0 4px 4px; overflow: hidden; }
.win-buttons button { width: 22px; display: flex; justify-content: center; align-items: center; background: linear-gradient(#9cb1cf, #4f6e9c); border-right: 1px solid #c5d3e6; }
.win-buttons .win-close { width: 40px; border: 0; background: linear-gradient(#dc9a8c, #c0341c 50%, #d0603c); }

.tabs { flex: none; height: 20px; display: flex; align-items: flex-end; background: #515151; padding-left: 37px; }
.tabs a { color: #e9e9e9; text-decoration: none; padding: 0 10px; height: 18px; line-height: 19px; }
.tabs a:nth-child(2) { padding-left: 11px; }
.tabs .active { background: linear-gradient(#f6f7f9, #dbdee3); color: #333; border-radius: 3px 3px 0 0; padding: 0 9px; }
.tabs a:nth-child(4) { padding-left: 11px; }
.tabs a:nth-child(6) { padding-right: 12px; }
.tabs-end { margin-left: auto; align-self: center; display: flex; align-items: center; gap: 12px; padding-right: 4px; }
.help { width: 12px; height: 12px; background: #3fa6d2; color: #fff; font-weight: 900; line-height: 12px; border-radius: 1px; }

.ribbon { flex: none; height: 84px; display: flex; gap: 3px; padding: 3px 3px 1px; background: linear-gradient(#d3d6dc, #c3c8d1 20%, #c5c9d2 45%, #e8ebef 90%); border-bottom: 2px solid #3f4246; box-shadow: inset 0 1px #e2e4e8; }
.group { display: flex; flex-direction: column; border: 1px solid #edf0f2; border-radius: 2px; overflow: hidden; background: linear-gradient(#d9dce2 0, #c6cad2 18%, #b9bfc9 20%, #dfe3e7 75%); }
.group h2 { height: 16px; flex: none; text-align: center; line-height: 15px; font-size: 10px; color: #fff; background: linear-gradient(#a4a6a9, #8d8f92); }
.tools { flex: 1; min-height: 0; display: flex; }
.g-orient { width: 293px; }
.g-style { width: 382px; }
.g-ref { width: 194px; }
.big { display: flex; flex-direction: column; align-items: center; padding-top: 4px; }
.big span { margin-top: 2px; line-height: 13px; text-align: center; white-space: nowrap; }
.g-orient .big { width: 37px; }
.g-orient .big:first-child { margin-left: 1px; }
.big i { display: inline-block; border: 2px solid transparent; border-top-color: #555; border-bottom: 0; vertical-align: middle; }
.tools hr { margin: 4px 2px; border: 0; width: 1px; background: #aeb2ba; box-shadow: 1px 0 #eef0f2; }
.w-edge { width: 69px; }
.w-persp { width: 56px; margin-right: 2px; }
.w-amb { width: 47px; }
.w-shadow { width: 44px; }
.w-model { width: 36px; }
.w-reflect { width: 52px; }
.w-perf { flex: 1; }
.big.active { border: 1px solid #cfa24c; border-radius: 2px; padding-top: 3px; background: linear-gradient(#eea36c 0, #f5a956 38%, #ff9a2c 40%, #ffcf60 80%, #fff09a); }
.cubes { display: grid; grid-template-columns: 29px 28px 27px; grid-template-rows: repeat(3, 20px); align-items: center; margin-left: 4px; padding-top: 1px; }
.pairs { display: flex; flex-direction: column; gap: 9px; padding-top: 8px; }
.pair { display: flex; border: 1px solid #eff2f4; border-radius: 3px; background: #e3e6e9; box-shadow: 0 0 1px #999; }
.pair button { width: 20px; height: 16px; display: flex; align-items: center; justify-content: center; }
.mini { display: grid; grid-template-columns: 24px 14px; grid-template-rows: repeat(3, 20px); align-items: center; margin-left: 5px; padding-top: 1px; }
.mini button:nth-child(4) { grid-row: 3; }
.mini button:nth-child(3) { grid-column: 1; }
.w-toggle { width: 55px; }
.refs { flex: 1; display: flex; flex-direction: column; gap: 9px; padding: 8px 2px 0 0; align-items: flex-start; }
.strip { display: flex; align-self: stretch; height: 18px; background: #e0e3e8; border: 1px solid #eef1f4; border-radius: 2px; box-shadow: 0 0 1px #999; }
.strip button { width: 21px; display: flex; align-items: center; justify-content: center; }
.strip.hot { align-self: flex-start; background: linear-gradient(#f8b26a, #ffa136 50%, #ffd67c); border-color: #cfb184; }
.hot button + button { border-left: 1px solid #ddb070; }

.work { flex: 1; min-height: 0; display: flex; }
.explorer { flex: none; width: 209px; display: flex; flex-direction: column; background: #eeefef; padding: 0 4px 1px 2px; border-right: 1px solid #c9ccd0; }
.explorer h2 { font: bold 9px/16px "Liberation Sans", Arial, sans-serif; color: #9cb3d0; padding-left: 2px; border-bottom: 1px solid #c2d0e0; margin-bottom: 2px; }
.tree-box { flex: 1; min-height: 0; display: grid; grid-template-columns: 1fr 13px; grid-template-rows: 1fr 13px; border: 1px solid #85898e; background: #fff; }
.tree { list-style: none; overflow: hidden; min-width: 0; min-height: 0; font: 9px/12px "Liberation Sans", Arial, sans-serif; color: #111; }
.tree li { display: flex; height: 15px; padding-left: 20px; white-space: nowrap; }
.tree li.deep { padding-left: 36px; }
.tree .node { flex: none; width: 16px; height: 15px; background: repeating-linear-gradient(#999 0 1px, transparent 1px 2px) 8px 0 / 1px 15px no-repeat, repeating-linear-gradient(90deg, #999 0 1px, transparent 1px 2px) 8px 8px / 7px 1px no-repeat; padding: 4px 0 0 5px; }
.tree .toggle { display: block; width: 7px; height: 7px; border: 1px solid #8d9298; background: linear-gradient(#222, #222) center / 3px 1px no-repeat, linear-gradient(#222, #222) center / 1px 3px no-repeat, #fff; }
.tree svg { width: 14px; height: 14px; margin: 1px 1px 0; }
.tree .label { height: 14px; padding: 0 2px; }
.tree .ghost .label { color: #c9c9c9; }
.tree .focus .label { outline: 1px dotted #333; padding-right: 3px; }
.vbar { display: flex; flex-direction: column; background: #efefef; }
.vbar button { height: 14px; display: flex; justify-content: center; align-items: center; }
.vgap { flex: 365; }
.vthumb { flex: 294; border: 1px solid #9a9da2; border-radius: 1px; background: repeating-linear-gradient(#777 0 1px, #eee 1px 3px) center / 6px 7px no-repeat, linear-gradient(90deg, #f4f4f4, #c6c8cc); }
.hbar { display: flex; background: #efefef; }
.hbar button { width: 15px; display: flex; justify-content: center; align-items: center; }
.hthumb { flex: 120; border: 1px solid #9a9da2; border-radius: 1px; background: repeating-linear-gradient(90deg, #777 0 1px, #eee 1px 3px) center / 7px 6px no-repeat, linear-gradient(#f4f4f4, #c9cbce); }
.hgap { flex: 38; }
.viewport { flex: 1; min-width: 0; width: 0; height: 100%; }

.status { flex: none; height: 17px; display: flex; background: #efefef; border-top: 1px solid #c5c7ca; font: 9px/14px "Liberation Sans", Arial, sans-serif; color: #222; }
.status span { flex: 1268; padding-left: 5px; }
.status span + span { flex: 332; border-left: 1px solid #a8abaf; padding: 0; }

.taskbar { flex: none; height: 33px; display: flex; background: linear-gradient(90deg, #203a66 0, #3a4b80 13%, #38507f 23%, #0f3c77 26%, #1a3f76 35%, #3b5c90 37%, #2d5288 45%, #1a4a83 54%, #2b568c 66%, #13427f 74%, #13427c 82%, #173462 100%); border-top: 1px solid #4f678e; box-shadow: inset 0 1px #7388a855; }
.start { flex: none; width: 50px; padding-left: 7px; }
.apps { flex: 0 1 1133px; min-width: 0; display: flex; justify-content: space-between; }
.apps button { width: 48px; display: flex; align-items: center; justify-content: center; }
.apps .open { border: 1px solid #8296b8; border-radius: 2px; background: linear-gradient(135deg, #7285a8aa, #38507faa 60%, #647aa1aa); }
.apps .lit { background: linear-gradient(120deg, #8e9db8, #adb9cc 50%, #72839f); width: 42px; margin-right: 6px; box-shadow: 2px 0 #39507c, 3px 0 #8296b8; }
.letter { font: bold 11px Lato, sans-serif; fill: #fff; text-anchor: middle; }
.letter.huge { font-size: 22px; font-weight: 900; }
.letter.tiny { font-size: 4px; }
.letter.red { fill: #b3242b; }
.letter.orange { fill: #cc7c30; }
.letter.brown { font-size: 14px; fill: #6a2f18; }
.letter.purple { font-size: 6px; fill: #8a38d8; }
.letter.conf { font-size: 3px; fill: #ddd; }
.tray { margin-left: auto; flex: none; display: flex; color: #fff; }
.power { width: 84px; display: flex; align-items: center; gap: 14px; padding-left: 11px; border-left: 1px solid #6e83a6; border-top: 1px solid #6e83a6; border-radius: 10px 0 0 0; background: #1c3a6a; border-right: 1px solid #102648; }
.battery { position: relative; width: 36px; height: 17px; border: 1px solid #ddd; background: linear-gradient(90deg, #168f3a 0 48%, #0b0d0e 48%); text-align: center; line-height: 15px; font-size: 10px; }
.battery::after { content: ""; position: absolute; right: -3px; top: 4px; width: 2px; height: 7px; background: #ddd; }
.tray-icons { display: flex; align-items: center; padding-left: 4px; gap: 9px; width: 109px; }
.tray-icons button:nth-child(2) { margin-right: 3px; }
.clock { width: 58px; text-align: center; font-size: 9px; line-height: 14px; padding-top: 2px; }
.show-desktop { width: 12px; border: 1px solid #6b82a8; background: linear-gradient(90deg, #5f7599, #2b4470); }
```

FILE: app.js
```js
const SVG_NS = "http://www.w3.org/2000/svg";

const constraints = ["Orient (2)", "Align (40)", "Mate (24)", "Orient (3)", "Align (41)", "Mate (25)",
  "Orient (4)", "Align (43)", "Mate (27)", "Orient (5)", "Mate (28)", "Align (44)", "Orient (6)",
  "Mate (30)", "Align (47)", "Align (48)", "Mate (31)", "Mate (32)", "Mate (33)"];

const rows = [
  ...constraints.map((text) => ({ text, icon: "mate", cls: text === "Mate (33)" ? "deep focus" : "deep" })),
  { text: "Features", icon: "feature", leaf: true },
  { text: "InterDesign Relations", icon: "relation", leaf: true },
  ...["8020-1530-56.000in #1<1>", "8020-1530-56.000in #2<1>"].map((text) => ({ text, icon: "ghost", cls: "ghost" })),
  ...["8020-1530-56.000in #3<1>", "8020-1530-56.000in #4<1>", "8020-1530-24.000in #1<1>",
    "8020-1530-24.000in #2<1>", "8020-1530-24.000in #3<1>", "8020-1530-24.000in #4<1>",
    "8020-1530-21.000in #1<1>", "8020-1530-21.000in #2<1>", "8020-1530-24.000in #5<1>",
    "8020-3380-End Fastener<1>", "8020-3380-End Fastener<2>", "8020-3380-End Fastener<17>",
    "8020-3380-End Fastener<18>"].map((text) => ({ text, icon: "part" })),
  ...["Extrusion to Extrusion Joining Fa", "Extrusion to Extrusion Joining Fa",
    "Seat Assembly<1>", "Pedal Assembly<1>"].map((text) => ({ text, icon: "asm" })),
  ...[1, 2, 3, 4, 5].map((n) => ({ text: `Linear Pattern (${n})`, icon: "pattern" })),
];

const tree = document.getElementById("tree");
for (const row of rows) {
  const item = document.createElement("li");
  item.className = row.cls || "";
  const node = document.createElement("span");
  node.className = "node";
  if (!row.leaf) {
    const toggle = document.createElement("button");
    toggle.className = "toggle";
    toggle.setAttribute("aria-label", `Expand ${row.text}`);
    node.append(toggle);
  }
  const svg = document.createElementNS(SVG_NS, "svg");
  const use = document.createElementNS(SVG_NS, "use");
  use.setAttribute("href", `#i-${row.icon}`);
  svg.append(use);
  const label = document.createElement("span");
  label.className = "label";
  label.textContent = row.text;
  item.append(node, svg, label);
  tree.append(item);
}
```
